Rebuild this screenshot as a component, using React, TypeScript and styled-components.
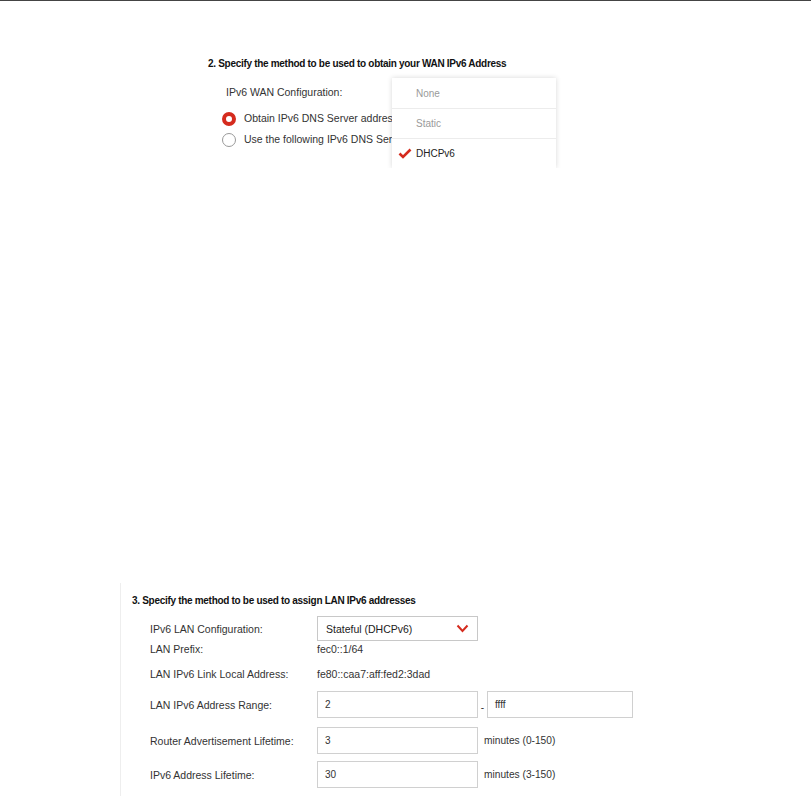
import React from "react";
import styled, { createGlobalStyle } from "styled-components";

const Global = createGlobalStyle`
  html, body { margin: 0; padding: 0; background: #fff; }
  body { font-family: "Liberation Sans", Arial, sans-serif; color: #333; }
`;

const Page = styled.div`
  border-top: 1px solid #444;
  min-height: 795px;
  display: flex;
  flex-direction: column;
`;

const WanSection = styled.section`
  position: relative;
  margin: 57px 0 0 208px;
  width: 360px;
  height: 109px;
`;

const Heading = styled.h2`
  margin: 0;
  font-size: 10px;
  line-height: 12px;
  font-weight: 700;
  letter-spacing: -0.3px;
  color: #111;
  white-space: nowrap;
`;

const FieldLabel = styled.div`
  margin: 15px 0 0 18px;
  font-size: 10.5px;
  line-height: 14px;
  color: #333;
`;

const RadioList = styled.div`
  margin: 12px 0 0 14px;
  width: 170px;
  overflow: hidden;
  display: flex;
  flex-direction: column;
  gap: 6px;
`;

const RadioRow = styled.label`
  display: flex;
  align-items: center;
  gap: 8px;
  font-size: 10.5px;
  line-height: 15px;
  color: #333;
  white-space: nowrap;
`;

const RadioDot = styled.span<{ $on?: boolean }>`
  box-sizing: border-box;
  width: 14px;
  height: 14px;
  border-radius: 50%;
  border: ${(p) => (p.$on ? "4px solid #d52b1e" : "1.5px solid #999")};
  background: #fff;
  flex: none;
`;

const Menu = styled.ul`
  position: absolute;
  left: 184px;
  top: 20px;
  width: 164px;
  margin: 0;
  padding: 0;
  list-style: none;
  background: #fff;
  box-shadow: 0 0 5px rgba(0, 0, 0, 0.16);
  clip-path: inset(-8px -8px 0 -8px);
`;

const MenuItem = styled.li<{ $selected?: boolean }>`
  position: relative;
  height: 30px;
  display: flex;
  align-items: center;
  padding-left: 24px;
  font-size: 10px;
  color: ${(p) => (p.$selected ? "#222" : "#9a9a9a")};
  border-top: 1px solid #ececec;
  box-sizing: border-box;
  &:first-child { border-top: none; }
`;

const Check = styled.svg`
  position: absolute;
  left: 6px;
  top: 9px;
`;

const LanSection = styled.section`
  margin: 416px 0 0 120px;
  border-left: 1px solid #eee;
  padding: 12px 0 8px 11px;
  flex: 1;
`;

const Rows = styled.div`
  margin: 9px 0 0 18px;
  display: flex;
  flex-direction: column;
`;

const Row = styled.div<{ $gap?: number; $h?: number }>`
  display: flex;
  align-items: center;
  margin-top: ${(p) => p.$gap ?? 0}px;
  height: ${(p) => p.$h ?? 14}px;
  font-size: 10.5px;
  color: #333;
  white-space: nowrap;
`;

const Label = styled.span`
  width: 167px;
  flex: none;
`;

const SelectBox = styled.div`
  box-sizing: border-box;
  width: 161px;
  height: 25px;
  border: 1px solid #c8c8c8;
  display: flex;
  align-items: center;
  justify-content: space-between;
  padding: 0 8px 0 8px;
  font-size: 10.5px;
  color: #222;
`;

const Input = styled.div<{ $w?: number }>`
  box-sizing: border-box;
  width: ${(p) => p.$w ?? 161}px;
  height: 27px;
  border: 1px solid #d0d0d0;
  display: flex;
  align-items: center;
  padding-left: 7px;
  font-size: 10px;
  color: #333;
  flex: none;
`;

const Dash = styled.span`
  width: 9px;
  text-align: center;
  font-size: 10px;
  padding-top: 6px;
`;

const Unit = styled.span`
  margin-left: 6px;
  font-size: 10.2px;
`;

export default function App() {
  return (
    <>
      <Global />
      <Page>
        <WanSection>
          <Heading>2. Specify the method to be used to obtain your WAN IPv6 Address</Heading>
          <FieldLabel>IPv6 WAN Configuration:</FieldLabel>
          <RadioList>
            <RadioRow>
              <RadioDot $on />
              Obtain IPv6 DNS Server address automatically
            </RadioRow>
            <RadioRow>
              <RadioDot />
              Use the following IPv6 DNS Server addresses
            </RadioRow>
          </RadioList>
          <Menu>
            <MenuItem>None</MenuItem>
            <MenuItem>Static</MenuItem>
            <MenuItem $selected>
              <Check width="14" height="11" viewBox="0 0 14 11">
                <path d="M1.5 5.5 L5 9 L12.5 1.5" fill="none" stroke="#d52b1e" strokeWidth="2.6" />
              </Check>
              DHCPv6
            </MenuItem>
          </Menu>
        </WanSection>

        <LanSection>
          <Heading>3. Specify the method to be used to assign LAN IPv6 addresses</Heading>
          <Rows>
            <Row $h={25}>
              <Label>IPv6 LAN Configuration:</Label>
              <SelectBox>
                Stateful (DHCPv6)
                <svg width="13" height="9" viewBox="0 0 13 9">
                  <path d="M1.5 1.5 L6.5 7 L11.5 1.5" fill="none" stroke="#d52b1e" strokeWidth="2" />
                </svg>
              </SelectBox>
            </Row>
            <Row $gap={1}>
              <Label>LAN Prefix:</Label>
              fec0::1/64
            </Row>
            <Row $gap={11}>
              <Label>LAN IPv6 Link Local Address:</Label>
              fe80::caa7:aff:fed2:3dad
            </Row>
            <Row $gap={10} $h={27}>
              <Label>LAN IPv6 Address Range:</Label>
              <Input>2</Input>
              <Dash>-</Dash>
              <Input $w={146}>ffff</Input>
            </Row>
            <Row $gap={9} $h={27}>
              <Label>Router Advertisement Lifetime:</Label>
              <Input>3</Input>
              <Unit>minutes (0-150)</Unit>
            </Row>
            <Row $gap={7} $h={27}>
              <Label>IPv6 Address Lifetime:</Label>
              <Input>30</Input>
              <Unit>minutes (3-150)</Unit>
            </Row>
          </Rows>
        </LanSection>
      </Page>
    </>
  );
}
